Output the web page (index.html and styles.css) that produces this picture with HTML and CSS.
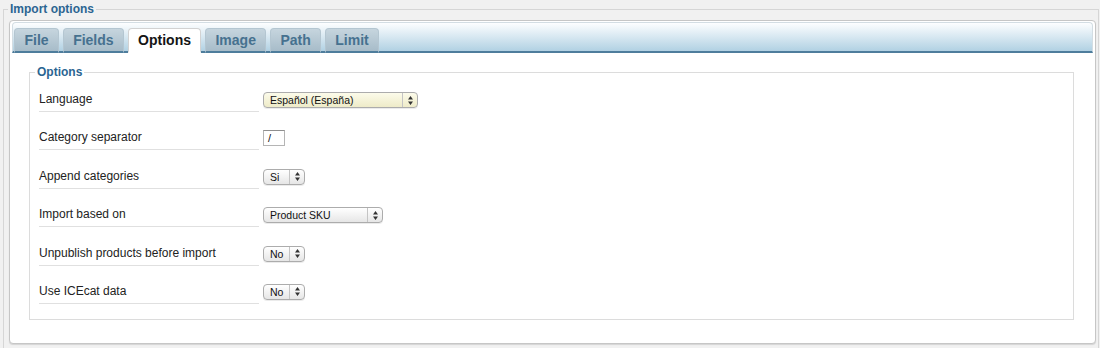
FILE: index.html
```html
<!DOCTYPE html>
<html>
<head>
<meta charset="utf-8">
<link rel="stylesheet" href="styles.css">
</head>
<body>
<fieldset class="outer">
  <legend class="outer-legend">Import options</legend>
  <div class="panel">
    <div class="tabbar">
      <div class="tab">File</div>
      <div class="tab">Fields</div>
      <div class="tab active">Options</div>
      <div class="tab">Image</div>
      <div class="tab">Path</div>
      <div class="tab">Limit</div>
    </div>
    <fieldset class="inner">
      <legend class="inner-legend">Options</legend>
      <div class="row">
        <div class="label">Language</div>
        <div class="control">
          <div class="select yellow w-lang"><span class="val">Español (España)</span><span class="arr"><svg width="5" height="9" viewBox="0 0 5 9"><path d="M2.5 0L5 3.5H0Z M2.5 9L5 5.5H0Z" fill="#333"/></svg></span></div>
        </div>
      </div>
      <div class="row">
        <div class="label">Category separator</div>
        <div class="control"><div class="input">/</div></div>
      </div>
      <div class="row">
        <div class="label">Append categories</div>
        <div class="control">
          <div class="select w-small"><span class="val">Si</span><span class="arr"><svg width="5" height="9" viewBox="0 0 5 9"><path d="M2.5 0L5 3.5H0Z M2.5 9L5 5.5H0Z" fill="#333"/></svg></span></div>
        </div>
      </div>
      <div class="row">
        <div class="label">Import based on</div>
        <div class="control">
          <div class="select w-prod"><span class="val">Product SKU</span><span class="arr"><svg width="5" height="9" viewBox="0 0 5 9"><path d="M2.5 0L5 3.5H0Z M2.5 9L5 5.5H0Z" fill="#333"/></svg></span></div>
        </div>
      </div>
      <div class="row">
        <div class="label">Unpublish products before import</div>
        <div class="control">
          <div class="select w-small"><span class="val">No</span><span class="arr"><svg width="5" height="9" viewBox="0 0 5 9"><path d="M2.5 0L5 3.5H0Z M2.5 9L5 5.5H0Z" fill="#333"/></svg></span></div>
        </div>
      </div>
      <div class="row last">
        <div class="label">Use ICEcat data</div>
        <div class="control">
          <div class="select w-small"><span class="val">No</span><span class="arr"><svg width="5" height="9" viewBox="0 0 5 9"><path d="M2.5 0L5 3.5H0Z M2.5 9L5 5.5H0Z" fill="#333"/></svg></span></div>
        </div>
      </div>
    </fieldset>
  </div>
</fieldset>
</body>
</html>
```

FILE: styles.css
```css
html, body {
  margin: 0;
  padding: 0;
  background: #f1f1f1;
  font-family: "Liberation Sans", Arial, sans-serif;
  font-size: 12px;
  color: #222;
}

.outer {
  margin: 2px 1px 0 3px;
  padding: 4px 2px 4px 5px;
  border: 1px solid #d6d6d6;
  min-width: 0;
}

.outer-legend {
  padding: 0 2px;
  margin-left: -1px;
  font-weight: bold;
  font-size: 12px;
  line-height: 14px;
  color: #2b6592;
}

.panel {
  background: #fff;
  border: 1px solid #c6c6c6;
  border-radius: 4px;
  padding: 1px 2px 23px 2px;
  box-shadow: 0 1px 1px rgba(0,0,0,0.12);
}

.tabbar {
  display: flex;
  align-items: flex-end;
  height: 23px;
  padding: 5px 0 0 1px;
  border: 1px solid #d3dde3;
  border-bottom: 2px solid #4e7d9c;
  border-radius: 4px 4px 0 0;
  background: linear-gradient(#fdfeff, #b1d1e3);
}

.tab {
  box-sizing: border-box;
  height: 25px;
  line-height: 23px;
  padding: 0 9.5px;
  margin: 0 3.5px -2px 0;
  border: 1px solid #b4c6d1;
  border-bottom: 2px solid #4e7d9c;
  border-radius: 4px 4px 0 0;
  background: linear-gradient(#c6d5de, #a7bcc9);
  color: #46718f;
  font-weight: bold;
  font-size: 14px;
}

.tab.active {
  background: #fff;
  color: #151515;
  border-color: #d2d2d2;
  border-bottom: 2px solid #fff;
}

.inner {
  margin: 12px 19px 0 17px;
  padding: 9px 10px 15px 9px;
  border: 1px solid #dcdcdc;
  min-width: 0;
}

.inner-legend {
  padding: 0 2px;
  margin-left: -4px;
  font-weight: bold;
  font-size: 12px;
  line-height: 14px;
  color: #2b6592;
}

.row {
  display: flex;
  height: 24px;
  margin-bottom: 14.4px;
}

.row.last {
  margin-bottom: 0;
}

.label {
  width: 220px;
  height: 23px;
  line-height: 23px;
  border-bottom: 1px solid #e0e0e0;
  color: #222;
  font-size: 12px;
}

.control {
  margin-left: 4px;
  display: flex;
  align-items: center;
  height: 24px;
}

.select {
  display: flex;
  align-items: stretch;
  box-sizing: border-box;
  height: 16px;
  border: 1px solid #acacac;
  border-radius: 4px;
  background: linear-gradient(#ffffff, #e6e6e6);
  font-size: 10.5px;
  color: #111;
  box-shadow: 0 1px 0 rgba(0,0,0,0.08);
}

.select.yellow {
  background: linear-gradient(#fcfbea, #eeebc8);
}

.select .val {
  flex: 1;
  padding-left: 6px;
  line-height: 14px;
  white-space: nowrap;
}

.select .arr {
  width: 14px;
  border-left: 1px solid #c4c4c4;
  display: flex;
  align-items: center;
  justify-content: center;
}

.w-lang { width: 155px; }
.w-small { width: 42px; }
.w-prod { width: 120px; }

.input {
  box-sizing: border-box;
  width: 22px;
  height: 16px;
  border: 1px solid #b5b5b5;
  border-top-color: #8f8f8f;
  background: #fff;
  font-size: 11px;
  line-height: 14px;
  padding-left: 4px;
  color: #111;
}
```
